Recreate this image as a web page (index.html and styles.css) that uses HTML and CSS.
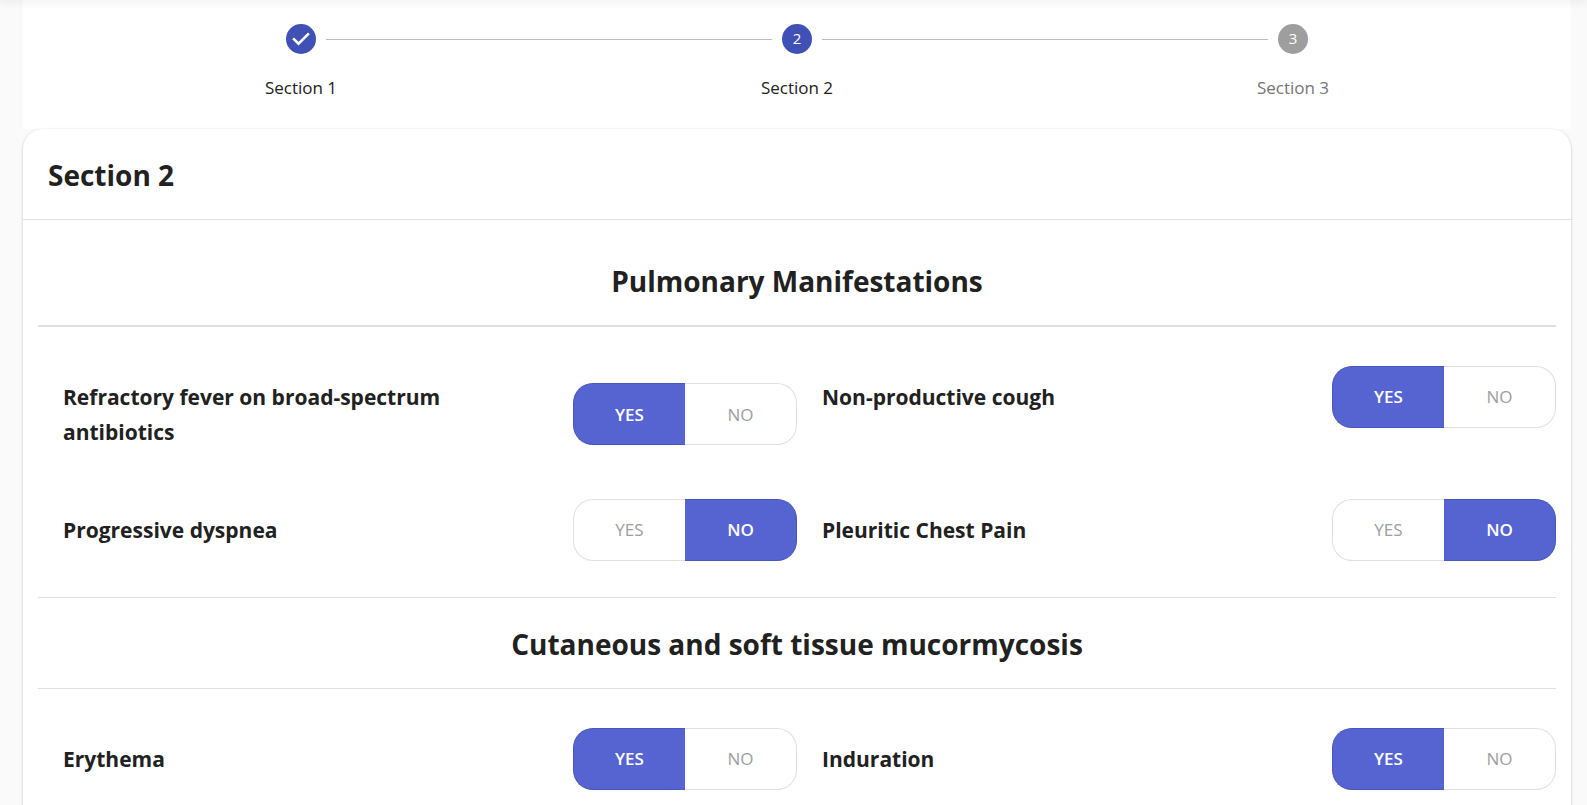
FILE: index.html
```html
<!DOCTYPE html>
<html lang="en">
<head>
<meta charset="utf-8">
<meta name="viewport" content="width=device-width, initial-scale=1">
<title>Section 2</title>
<link rel="stylesheet" href="styles.css">
</head>
<body>
<div class="topbar-shadow"></div>
<main class="page">
  <ol class="stepper">
    <li class="step step-done">
      <span class="step-icon">
        <svg width="18" height="14" viewBox="0 0 18 14" aria-hidden="true"><path d="M2 7.200L6.500 11.700L16 2.200" fill="none" stroke="#fff" stroke-width="2.500" stroke-linecap="square"/></svg>
      </span>
      <span class="step-label">Section 1</span>
    </li>
    <li class="step step-current" aria-current="step">
      <span class="step-icon">2</span>
      <span class="step-label">Section 2</span>
    </li>
    <li class="step">
      <span class="step-icon">3</span>
      <span class="step-label">Section 3</span>
    </li>
  </ol>

  <section class="card">
    <h1 class="card-title">Section 2</h1>
    <div class="card-body">
      <h2 class="group-title group-title-first">Pulmonary Manifestations</h2>
      <div class="questions">
        <div class="question">
          <span class="question-label" id="q-fever">Refractory fever on broad-spectrum antibiotics</span>
          <div class="toggle" role="group" aria-labelledby="q-fever">
            <button type="button" class="option" aria-pressed="true">YES</button>
            <button type="button" class="option" aria-pressed="false">NO</button>
          </div>
        </div>
        <div class="question">
          <span class="question-label" id="q-cough">Non-productive cough</span>
          <div class="toggle" role="group" aria-labelledby="q-cough">
            <button type="button" class="option" aria-pressed="true">YES</button>
            <button type="button" class="option" aria-pressed="false">NO</button>
          </div>
        </div>
        <div class="question">
          <span class="question-label" id="q-dyspnea">Progressive dyspnea</span>
          <div class="toggle" role="group" aria-labelledby="q-dyspnea">
            <button type="button" class="option" aria-pressed="false">YES</button>
            <button type="button" class="option" aria-pressed="true">NO</button>
          </div>
        </div>
        <div class="question">
          <span class="question-label" id="q-pain">Pleuritic Chest Pain</span>
          <div class="toggle" role="group" aria-labelledby="q-pain">
            <button type="button" class="option" aria-pressed="false">YES</button>
            <button type="button" class="option" aria-pressed="true">NO</button>
          </div>
        </div>
      </div>

      <h2 class="group-title">Cutaneous and soft tissue mucormycosis</h2>
      <div class="questions">
        <div class="question">
          <span class="question-label" id="q-erythema">Erythema</span>
          <div class="toggle" role="group" aria-labelledby="q-erythema">
            <button type="button" class="option" aria-pressed="true">YES</button>
            <button type="button" class="option" aria-pressed="false">NO</button>
          </div>
        </div>
        <div class="question">
          <span class="question-label" id="q-induration">Induration</span>
          <div class="toggle" role="group" aria-labelledby="q-induration">
            <button type="button" class="option" aria-pressed="true">YES</button>
            <button type="button" class="option" aria-pressed="false">NO</button>
          </div>
        </div>
      </div>
    </div>
  </section>
</main>
</body>
</html>
```

FILE: styles.css
```css
* {
  box-sizing: border-box;
}

body {
  margin: 0;
  background: #fafafa;
  color: #212121;
  font-family: "Segoe UI", "Open Sans", "Noto Sans", sans-serif;
}

.topbar-shadow {
  position: relative;
  z-index: 1;
  height: 0;
  box-shadow: 0 0 8px 1px rgba(0, 0, 0, 0.2);
}

.page {
  padding: 0 16px 0 23px;
}

/* Stepper */
.stepper {
  display: grid;
  grid-template-columns: repeat(3, 1fr);
  margin: 0;
  padding: 24px 30px;
  list-style: none;
  background: #fff;
}

.step {
  display: flex;
  flex-direction: column;
  align-items: center;
  gap: 22px;
  position: relative;
  color: #757575;
}

.step + .step::before {
  content: "";
  position: absolute;
  top: 15px;
  left: calc(-50% + 25px);
  right: calc(50% + 25px);
  border-top: 1px solid #bdbdbd;
}

.step-icon {
  display: flex;
  align-items: center;
  justify-content: center;
  width: 30px;
  height: 30px;
  border-radius: 50%;
  background: #9e9e9e;
  color: #fff;
  font-size: 15px;
  line-height: 28px;
  padding-bottom: 2px;
}

.step-done .step-icon {
  padding-bottom: 0;
}

.step-label {
  padding-bottom: 5px;
  font-size: 17px;
  line-height: 24px;
}

.step-done .step-icon,
.step-current .step-icon {
  background: #3f51b5;
}

.step-done .step-label,
.step-current .step-label {
  color: #212121;
  font-weight: 500;
}

/* Card */
.card {
  border-radius: 20px;
  background: #fff;
  box-shadow: 0 1px 3px rgba(0, 0, 0, 0.24);
}

.card-title {
  margin: 0;
  padding: 21px 25px 19px;
  border-bottom: 1px solid #e0e0e0;
  font-size: 28px;
  font-weight: 700;
  line-height: 50px;
}

.card-body {
  padding: 16px 15px;
}

.group-title {
  margin: 0;
  padding: 21px 0 19px;
  border-top: 1px solid #e0e0e0;
  border-bottom: 1px solid #e0e0e0;
  font-size: 28px;
  font-weight: 700;
  line-height: 50px;
  text-align: center;
}

.group-title-first {
  padding-top: 20px;
  border-top: 0;
  border-bottom-width: 2px;
}

/* Questions */
.questions {
  display: grid;
  grid-template-columns: repeat(2, 1fr);
  align-items: start;
  row-gap: 35px;
  padding: 38px 0 36px;
}

.question {
  display: flex;
  align-items: center;
  justify-content: space-between;
}

.question-label {
  padding: 15px 25px 13px;
  font-size: 21px;
  font-weight: 700;
  line-height: 35px;
}

.toggle {
  display: flex;
  flex: none;
  width: 224px;
}

.option {
  flex: 1;
  height: 62px;
  border: 1px solid #e0e0e0;
  background: #fff;
  color: #9e9e9e;
  font-family: inherit;
  font-size: 17px;
  cursor: pointer;
}

.option:first-child {
  border-right: 0;
  border-radius: 20px 0 0 20px;
}

.option:last-child {
  border-left: 0;
  border-radius: 0 20px 20px 0;
}

.option[aria-pressed="true"] {
  border-color: #4a58bd;
  background: #5564d1;
  color: #fff;
  font-weight: 600;
}
```
